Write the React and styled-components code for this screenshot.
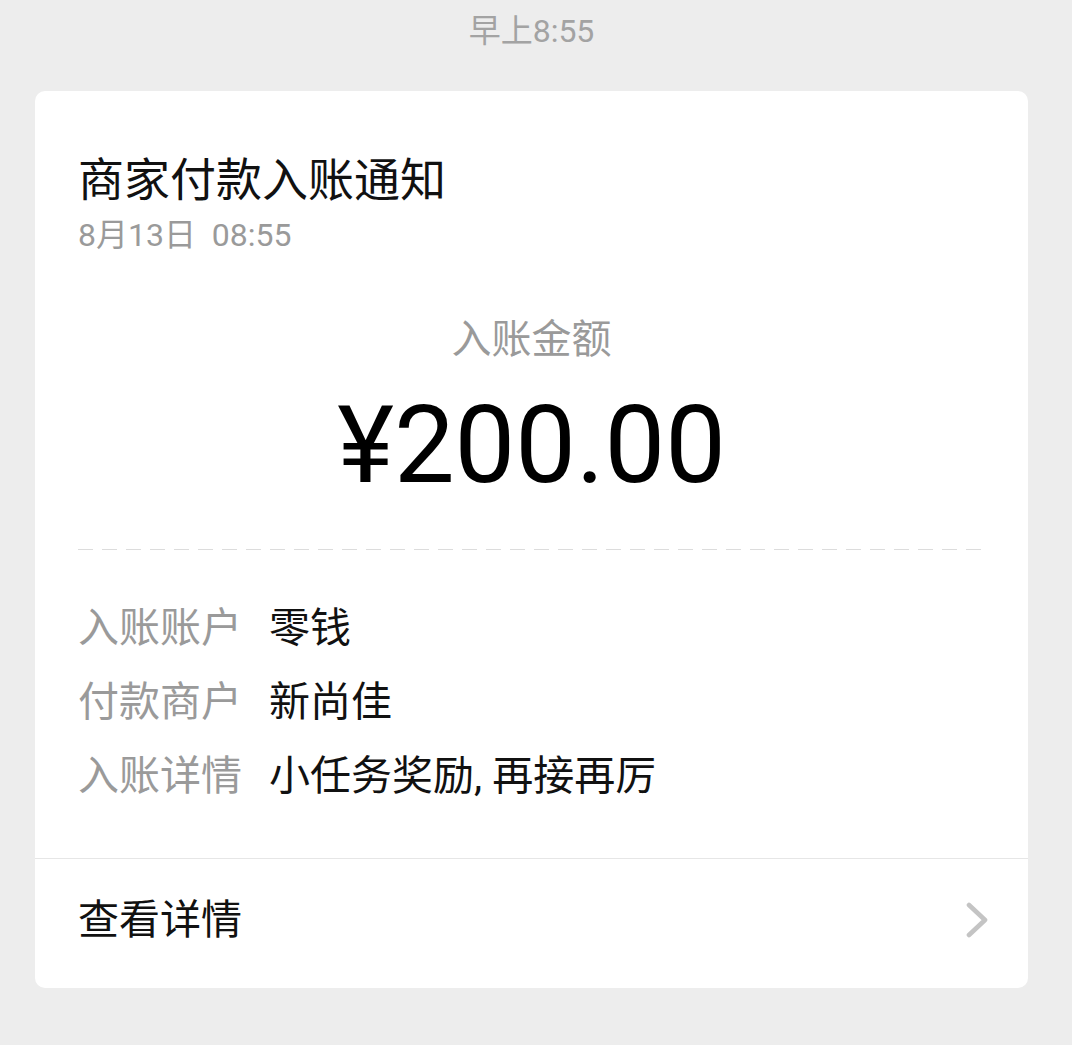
import React from 'react';
import styled, { createGlobalStyle } from 'styled-components';

const GlobalStyle = createGlobalStyle`
  html, body {
    margin: 0;
    padding: 0;
    background: #ededed;
  }
  body {
    min-height: 100vh;
    font-family: Roboto, "Noto Sans CJK SC", "Noto Sans", sans-serif;
    -webkit-font-smoothing: antialiased;
  }
`;

const Page = styled.div`
  width: 993px;
  margin-left: 35px;
  padding-top: 9px;
  padding-bottom: 57px;
`;

const TimeStamp = styled.div`
  text-align: center;
  font-size: 32px;
  line-height: 44px;
  color: #a3a3a3;
`;

const Card = styled.div`
  margin-top: 38px;
  background: #ffffff;
  border-radius: 10px;
  overflow: hidden;
`;

const Body = styled.div`
  padding: 59px 43px 45px;
`;

const Title = styled.div`
  font-size: 46px;
  line-height: 60px;
  color: #111;
`;

const DateLine = styled.div`
  margin-top: 3px;
  font-size: 32px;
  line-height: 44px;
  color: #9a9a9a;
  white-space: pre;
`;

const AmountBlock = styled.div`
  margin-top: 55px;
  display: flex;
  flex-direction: column;
  align-items: center;
`;

const AmountLabel = styled.div`
  font-size: 40px;
  line-height: 56px;
  color: #9a9a9a;
`;

const Amount = styled.div`
  margin-top: 12px;
  font-size: 108px;
  line-height: 130px;
  color: #000;
`;

const Dashed = styled.div`
  margin-top: 39px;
  height: 1px;
  background-image: linear-gradient(to right, #dcdcdc 0 15px, transparent 15px 24px);
  background-size: 24px 1px;
  background-repeat: repeat-x;
`;

const InfoList = styled.div`
  margin-top: 41px;
  display: grid;
  grid-template-columns: auto 1fr;
  column-gap: 27px;
`;

const InfoLabel = styled.div`
  font-size: 41px;
  line-height: 74px;
  color: #9a9a9a;
`;

const InfoValue = styled.div`
  font-size: 41px;
  line-height: 74px;
  color: #111;
`;

const Footer = styled.div`
  border-top: 1px solid #e6e6e6;
  padding: 33px 40px 40px 43px;
  display: flex;
  align-items: center;
  justify-content: space-between;
`;

const FooterText = styled.div`
  font-size: 41px;
  line-height: 56px;
  color: #111;
`;

const Chevron = () => (
  <svg width="24" height="36" viewBox="0 0 24 36" fill="none">
    <polyline
      points="5,3 21,18 5,33"
      stroke="#c4c4c4"
      strokeWidth="4.6"
      strokeLinecap="round"
      strokeLinejoin="round"
    />
  </svg>
);

const rows = [
  { label: '入账账户', value: '零钱' },
  { label: '付款商户', value: '新尚佳' },
  { label: '入账详情', value: '小任务奖励, 再接再厉' },
];

export default function App() {
  return (
    <>
      <GlobalStyle />
      <Page>
        <TimeStamp>早上8:55</TimeStamp>
        <Card>
          <Body>
            <Title>商家付款入账通知</Title>
            <DateLine>8月13日  08:55</DateLine>
            <AmountBlock>
              <AmountLabel>入账金额</AmountLabel>
              <Amount>¥200.00</Amount>
            </AmountBlock>
            <Dashed />
            <InfoList>
              {rows.map((r) => (
                <React.Fragment key={r.label}>
                  <InfoLabel>{r.label}</InfoLabel>
                  <InfoValue>{r.value}</InfoValue>
                </React.Fragment>
              ))}
            </InfoList>
          </Body>
          <Footer>
            <FooterText>查看详情</FooterText>
            <Chevron />
          </Footer>
        </Card>
      </Page>
    </>
  );
}
